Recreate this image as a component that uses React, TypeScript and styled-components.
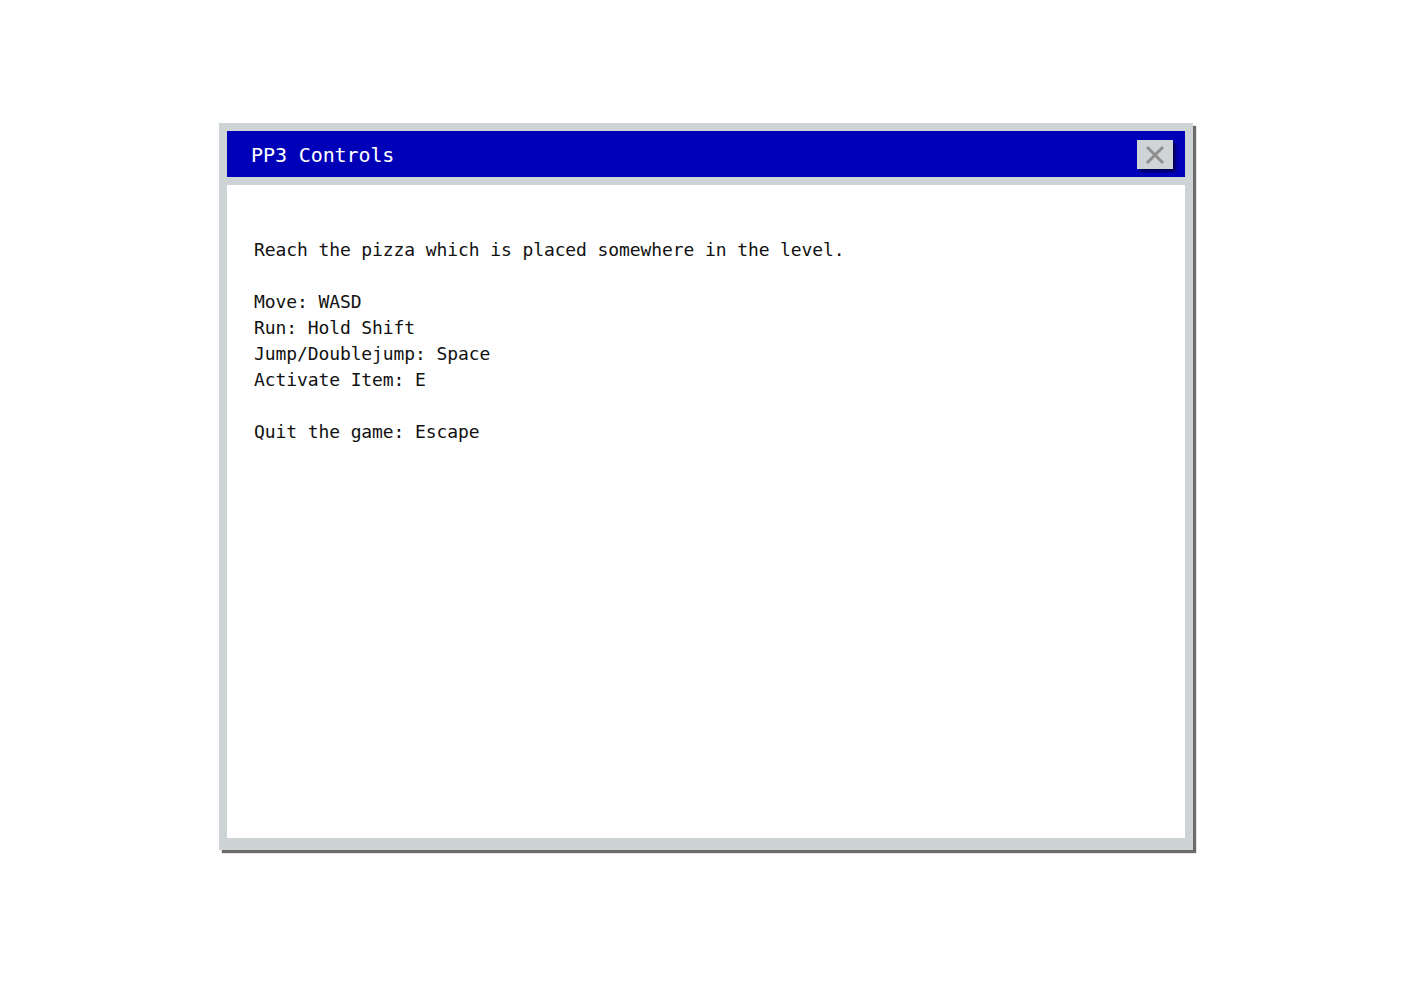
import React from "react";
import styled, { createGlobalStyle } from "styled-components";

const Global = createGlobalStyle`
  html, body { margin: 0; padding: 0; background: #ffffff; }
  body { font-family: "DejaVu Sans Mono", "Liberation Mono", monospace; }
`;

const Page = styled.div`
  display: flex;
  justify-content: center;
  padding: 123px 0 40px;
`;

const Window = styled.div`
  width: 974px;
  height: 727px;
  box-sizing: border-box;
  background: #ced3d6;
  padding: 8px 8px 12px 8px;
  display: flex;
  flex-direction: column;
  gap: 8px;
  box-shadow: 3px 3px 1px rgba(70, 70, 70, 0.8);
`;

const TitleBar = styled.div`
  height: 46px;
  flex: none;
  background: #0000b9;
  display: flex;
  align-items: center;
  justify-content: space-between;
  padding: 0 12px 0 24px;
`;

const Title = styled.span`
  color: #ffffff;
  font-size: 20px;
  letter-spacing: -0.1px;
  margin-top: 1px;
`;

const CloseButton = styled.button`
  width: 36px;
  height: 29px;
  border: none;
  padding: 0;
  margin-top: 1px;
  background: #cfd4d7;
  display: flex;
  align-items: center;
  justify-content: center;
  box-shadow: 3px 3px 2px rgba(0, 0, 60, 0.7);
  cursor: pointer;
`;

const Content = styled.div`
  flex: 1;
  background: #ffffff;
  padding: 52px 27px;
`;

const Text = styled.pre`
  margin: 0;
  font-family: "DejaVu Sans Mono", "Liberation Mono", monospace;
  font-size: 18px;
  line-height: 26px;
  color: #111111;
  letter-spacing: -0.1px;
`;

const text = `Reach the pizza which is placed somewhere in the level.

Move: WASD
Run: Hold Shift
Jump/Doublejump: Space
Activate Item: E

Quit the game: Escape`;

export default function App() {
  return (
    <>
      <Global />
      <Page>
        <Window>
          <TitleBar>
            <Title>PP3 Controls</Title>
            <CloseButton aria-label="Close">
              <svg width="20" height="20" viewBox="0 0 20 20">
                <path d="M2 2 L18 18 M18 2 L2 18" stroke="#8e8e8e" strokeWidth="3" />
              </svg>
            </CloseButton>
          </TitleBar>
          <Content>
            <Text>{text}</Text>
          </Content>
        </Window>
      </Page>
    </>
  );
}
